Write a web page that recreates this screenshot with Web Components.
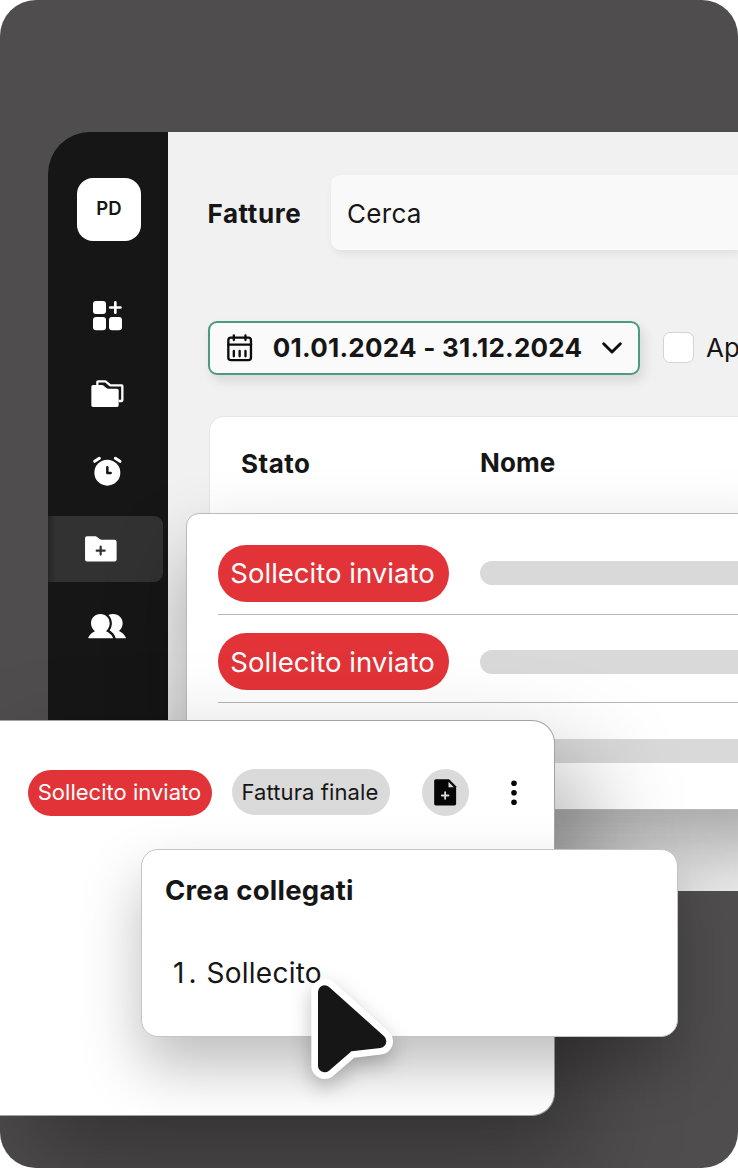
<!DOCTYPE html>
<html lang="it">
<head>
<meta charset="utf-8">
<title>Fatture</title>
<style>
body{margin:0;background:#fff;font-family:Inter,"Liberation Sans",sans-serif;color:#161616}
</style>
</head>
<body>
<invoice-scene></invoice-scene>
<script>
const define = (name, html, setup) => {
  const t = document.createElement('template');
  t.innerHTML = html;
  customElements.define(name, class extends HTMLElement {
    constructor() {
      super();
      this.attachShadow({mode: 'open'}).appendChild(t.content.cloneNode(true));
    }
    connectedCallback() { if (setup) setup(this, this.shadowRoot); }
  });
};

const icons = {
  grid: [29, 29.3, '0 0 87 88', '<g fill="#fff"><rect width="39" height="39" rx="9"/><rect y="48" width="39" height="40" rx="9"/><rect x="48" y="48" width="39" height="40" rx="9"/></g><path d="M67 4v31M51.500 19.500h31" stroke="#fff" stroke-width="8" stroke-linecap="round"/>'],
  folders: [32.7, 27, '130 90 98 81', '<path d="M149 109V96q0-2 2-2h21q2 0 4 2l9 8q2 2 4 2h33q2 0 2 2v43q0 2-2 2h-9" fill="none" stroke="#fff" stroke-width="7"/><path d="M136 105h27q3 0 5 2l8 7q3 2 6 2h26q5 0 5 5v45q0 5-5 5h-72q-5 0-5-5v-56q0-5 5-5z" fill="#fff"/>'],
  alarm: [29, 29, '135 321 87 87', '<circle cx="178" cy="368" r="39" fill="#fff"/><path d="M140 334l14-9M216 334l-14-9" stroke="#fff" stroke-width="9" stroke-linecap="round"/><path d="M178 352v17h10" fill="none" stroke="#161616" stroke-width="7.500" stroke-linecap="round" stroke-linejoin="round"/>'],
  folderplus: [32, 25.6, '111 559 96 77', '<path d="M117 560h25q3 0 5 2l8 6q3 2 6 2h39q6 0 6 6v54q0 6-6 6h-83q-6 0-6-6v-64q0-6 6-6z" fill="#fff"/><path d="M158 591v24M146 603h24" stroke="#303030" stroke-width="6.500" stroke-linecap="round"/>'],
  users: [38, 25, '120 793 114 75', '<path d="M181 796q6-3 14-3c17 0 29 12 29 28 0 10-5 18-11 23 9 4 16 10 21 20q0 2-2 2h-29c-2-10-9-18-18-24 10-14 9-34-4-46z" fill="#fff"/><path d="M157 793c16 0 28 12 28 28 0 10-5 19-11 24 9 4 16 9 21 19q0 2-2 2h-70q-3 0-2-3c5-9 12-14 20-18-7-5-12-14-12-24 0-16 12-28 28-28z" fill="#fff"/>'],
  calendar: [25.3, 27.4, '82.500 101 76 82', '<g fill="none" stroke="#0b0b0b" stroke-width="7" stroke-linecap="round"><rect x="86.500" y="111.500" width="68" height="68" rx="8"/><path d="M86 133h69M103 105v14M138 105v14M103 152v16M120.500 152v16M138 152v16"/></g>'],
  chevron: [20, 12, '0 0 60 36', '<path d="M5 5l25 25L55 5" fill="none" stroke="#0b0b0b" stroke-width="8.500" stroke-linecap="round" stroke-linejoin="round"/>'],
  fileplus: [22.3, 26.7, '102.500 237.500 67 80', '<path d="M108 238h40l21 21v53q0 5-5 5h-56q-5 0-5-5v-69q0-5 5-5z" fill="#060606"/><path d="M146 246v16h16z" fill="#dadada"/><path d="M136 277v20M126 287h20" stroke="#dadada" stroke-width="5.500" stroke-linecap="round"/>'],
  dots: [6, 26, '0 0 6 26', '<g fill="#060606"><circle cx="3" cy="3.200" r="2.800"/><circle cx="3" cy="12.700" r="2.800"/><circle cx="3" cy="22.200" r="2.800"/></g>'],
  cursor: [93.3, 110, '50 110 280 330', '<g stroke-linejoin="round"><path d="M106 155L271 303L178 314L106 376z" fill="#fff" stroke="#fff" stroke-width="80"/><path d="M106 155L271 303L178 314L106 376z" fill="#161616" stroke="#161616" stroke-width="40"/></g>']
};

define('ui-icon', `<style>:host{display:block;flex:none}svg{display:block;overflow:visible}</style><span></span>`, (el, root) => {
  const [w, h, box, body] = icons[el.getAttribute('name')];
  root.querySelector('span').innerHTML = `<svg width="${w}" height="${h}" viewBox="${box}">${body}</svg>`;
});

define('ui-pill', `<style>
:host{display:flex;box-sizing:border-box;align-items:center;justify-content:center;flex:none;width:231px;height:57px;border-radius:29px;background:#e23338;color:#fff;font-size:27.500px;line-height:34px;letter-spacing:.02px;padding-right:2px;white-space:nowrap}
:host([size=small]){width:184px;height:46px;font-size:22px;padding-bottom:1px;padding-right:1px}
:host([tone=grey]){width:158px;background:#dadada;color:#161616;letter-spacing:.1px;padding-right:2px}
</style><slot></slot>`);

define('side-bar', `<style>
:host{display:flex;flex-direction:column;align-items:center;width:120px;flex:none;box-sizing:border-box;padding-top:45.500px;background:#161616}
.logo{width:64px;height:63.500px;margin-left:2px;border-radius:16px;background:#fff;display:flex;justify-content:center;align-items:center;font-size:18.500px;font-weight:600;line-height:60px;padding-bottom:3px;box-sizing:border-box}
nav{width:120px;margin-top:36px;display:grid;grid-auto-rows:77.700px}
.item{display:flex;align-items:center;justify-content:center;padding-right:2px}
.active{margin:6px 5px 6px 0;padding-right:9px;border-radius:0 9px 9px 0;background:linear-gradient(90deg,#262626 0,#323232 8px)}
</style><div class="logo">PD</div><nav>
<div class="item"><ui-icon name="grid"></ui-icon></div>
<div class="item"><ui-icon name="folders"></ui-icon></div>
<div class="item"><ui-icon name="alarm"></ui-icon></div>
<div class="item active"><ui-icon name="folderplus"></ui-icon></div>
<div class="item"><ui-icon name="users"></ui-icon></div></nav>`);

define('date-range', `<style>
:host{display:flex;align-items:center;box-sizing:border-box;width:432.500px;height:54px;flex:none;padding:0 16px 0 17px;border:2px solid #4d9a80;border-radius:9px;background:#f9faf9;box-shadow:4px 6px 12px rgba(0,0,0,.1);font-size:26px;font-weight:700;line-height:32px;white-space:nowrap}
.t{flex:1;padding-left:21px;letter-spacing:.24px}
</style><ui-icon name="calendar"></ui-icon><span class="t"><slot></slot></span><ui-icon name="chevron"></ui-icon>`);

define('app-window', `<style>
:host{display:flex;height:759px;width:690px;overflow:hidden;border-radius:42px 0 0 0}
main{flex:1;min-width:0;box-sizing:border-box;padding:43px 0 0 39.500px;position:relative;background:#f1f1f1}
.head{display:flex;align-items:center;height:75px}
h1{margin:2px 0 0;width:123.500px;font-size:26px;font-weight:700;line-height:32px;letter-spacing:.6px;flex:none}
.search{flex:1;height:75px;box-sizing:border-box;padding-left:16px;border-radius:9px 0 0 9px;background:#f9f9f9;box-shadow:2px 4px 8px rgba(0,0,0,.07);font-size:26px;line-height:77.500px;letter-spacing:.3px}
.filters{display:flex;align-items:center;margin-top:70.700px;height:54px;white-space:nowrap;font-size:26px;line-height:32px}
.filters>span{position:relative;top:0}
.box{width:31px;height:31px;box-sizing:border-box;border:1px solid #d4d4d4;border-radius:7px;background:#fff;margin:-1px 12.500px 0 22.500px;flex:none}
.table{margin:41.700px 0 0 1px;height:240px;border:1px solid #e6e6e6;border-right:0;border-radius:15px 0 0 0;background:#fff;box-sizing:border-box;display:flex;font-size:26px;font-weight:700;line-height:32px;padding:31px 0 0 31.500px;letter-spacing:.5px}
.table span{width:239px}.table span+span{margin-top:-1px;letter-spacing:.1px}
.rows{position:absolute;left:18px;top:381px;width:620px;height:297px;box-sizing:border-box;border:1px solid #b9b9b9;border-radius:13px 0 0 0;background:#fff;box-shadow:0 40px 80px rgba(0,0,0,.32);padding:12.600px 0 0 31px}
.row{display:flex;align-items:center;height:88.200px;box-sizing:border-box;border-bottom:1px solid #b5b8b7;padding:18px 0 11.500px}
.row:last-child{border:0;padding-bottom:10.500px}
.row i{flex:1;margin-left:31px;height:24px;border-radius:12px 0 0 12px;background:#d9d9d9}
</style><side-bar></side-bar><main>
<div class="head"><h1>Fatture</h1><div class="search">Cerca</div></div>
<div class="filters"><date-range>01.01.2024 - 31.12.2024</date-range><span class="box"></span><span>Ap</span></div>
<div class="table"><span>Stato</span><span>Nome</span></div>
<div class="rows">
<div class="row"><ui-pill>Sollecito inviato</ui-pill><i></i></div>
<div class="row"><ui-pill>Sollecito inviato</ui-pill><i></i></div>
<div class="row"><ui-pill style="visibility:hidden"></ui-pill><i></i></div>
</div></main>`);

define('detail-card', `<style>
:host{display:block;box-sizing:border-box;border:1px solid #a0a3a2;border-left:0;border-radius:0 23px 23px 0;background:#fff;box-shadow:25px 45px 100px rgba(0,0,0,.34)}
.bar{display:flex;align-items:center;padding:48px 0 0 28px;height:47px}
.grey{margin:-1px 32px 0 20px}
.round{width:47px;height:47px;border-radius:50%;background:#dadada;display:flex;align-items:center;justify-content:center;margin-right:42px}
</style><div class="bar"><ui-pill size="small">Sollecito inviato</ui-pill><ui-pill class="grey" size="small" tone="grey">Fattura finale</ui-pill><span class="round"><ui-icon name="fileplus"></ui-icon></span><ui-icon name="dots"></ui-icon></div>`);

define('linked-menu', `<style>
:host{display:block;box-sizing:border-box;border:1px solid #c4c4c4;border-radius:17px;background:#fff;box-shadow:0 30px 60px rgba(0,0,0,.26);padding:23px}
h2{margin:0;font-size:27.500px;font-weight:700;line-height:34px;letter-spacing:.25px}
p{margin:48.500px 0 0 8px;font-size:28px;line-height:34px;letter-spacing:.25px;white-space:pre}
.n{display:inline-block;width:33.500px;letter-spacing:4px}
</style><h2>Crea collegati</h2><p><span class="n">1.</span>Sollecito</p>`);

define('invoice-scene', `<style>
:host{display:block;position:relative;width:738px;height:1168px;overflow:hidden;border-radius:36px;background:#4f4d4e;box-sizing:border-box;padding:132px 0 0 48px}
detail-card{position:absolute;left:0;top:720px;width:555px;height:396px}
linked-menu{position:absolute;left:141px;top:849px;width:537px;height:188px}
.cursor{position:absolute;left:306px;top:977px;filter:drop-shadow(0 8px 10px rgba(0,0,0,.25))}
</style><app-window></app-window><detail-card></detail-card><linked-menu></linked-menu><ui-icon class="cursor" name="cursor"></ui-icon>`);
</script>
</body>
</html>
